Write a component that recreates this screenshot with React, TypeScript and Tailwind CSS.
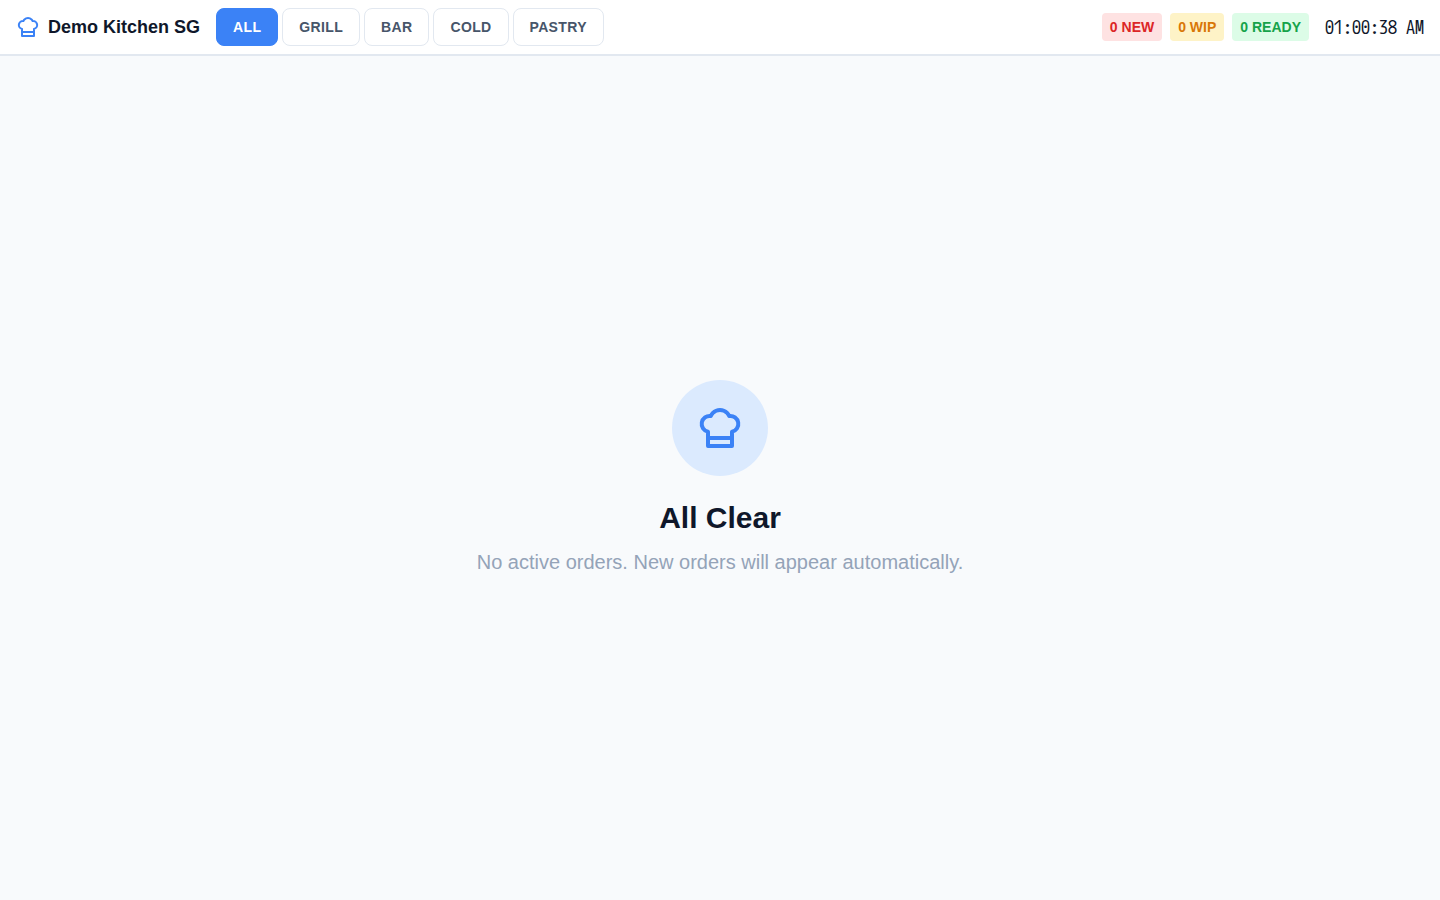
import { useState } from "react";

const stations = ["ALL", "GRILL", "BAR", "COLD", "PASTRY"];

const counts = [
  { label: "0 NEW", tone: "bg-[#fee2e2] text-[#dc2626]" },
  { label: "0 WIP", tone: "bg-[#fef3c7] text-[#d97706]" },
  { label: "0 READY", tone: "bg-[#dcfce7] text-[#16a34a]" },
];

function ChefHat({ className }: { className: string }) {
  return (
    <svg
      viewBox="0 0 24 24"
      fill="none"
      stroke="currentColor"
      strokeWidth="2"
      strokeLinecap="round"
      strokeLinejoin="round"
      aria-hidden="true"
      className={className}
    >
      <path d="M6 13.87A4 4 0 0 1 7.41 6a5.11 5.11 0 0 1 1.05-1.54 5 5 0 0 1 7.08 0A5.11 5.11 0 0 1 16.59 6 4 4 0 0 1 18 13.87V21H6Z" />
      <line x1="6" x2="18" y1="17" y2="17" />
    </svg>
  );
}

export default function App() {
  const [active, setActive] = useState("ALL");

  return (
    <div className="flex min-h-screen flex-col bg-[#f8fafc] font-['Liberation_Sans',Arial,sans-serif] text-[#0f172a]">
      <header className="flex items-center justify-between border-b-2 border-[#e2e8f0] bg-white px-4 py-2">
        <div className="flex items-center gap-4">
          <div className="flex items-center gap-2">
            <ChefHat className="size-6 text-[#3b82f6]" />
            <span className="text-lg font-bold">Demo Kitchen SG</span>
          </div>
          <nav className="flex gap-1">
            {stations.map((station) => (
              <button
                key={station}
                type="button"
                aria-pressed={station === active}
                onClick={() => setActive(station)}
                className={`rounded-lg border px-4 py-2 text-sm font-bold tracking-wide ${
                  station === active
                    ? "border-[#3b82f6] bg-[#3b82f6] text-white"
                    : "border-[#e2e8f0] bg-white text-[#475569]"
                }`}
              >
                {station}
              </button>
            ))}
          </nav>
        </div>
        <div className="flex items-center gap-4">
          <div className="flex gap-2">
            {counts.map(({ label, tone }) => (
              <span key={label} className={`rounded px-2 py-1 text-sm font-bold ${tone}`}>
                {label}
              </span>
            ))}
          </div>
          <time className="font-['M_PLUS_1_Code','Noto_Sans_Mono_CJK_JP','Liberation_Mono',monospace] text-lg">
            01:00:38 AM
          </time>
        </div>
      </header>
      <main className="flex flex-1 flex-col items-center justify-center text-center">
        <div className="mb-6 flex size-24 items-center justify-center rounded-full bg-[#dbeafe]">
          <ChefHat className="size-12 text-[#3b82f6]" />
        </div>
        <h1 className="mb-3 text-3xl font-bold">All Clear</h1>
        <p className="text-xl text-[#94a3b8]">No active orders. New orders will appear automatically.</p>
      </main>
    </div>
  );
}
